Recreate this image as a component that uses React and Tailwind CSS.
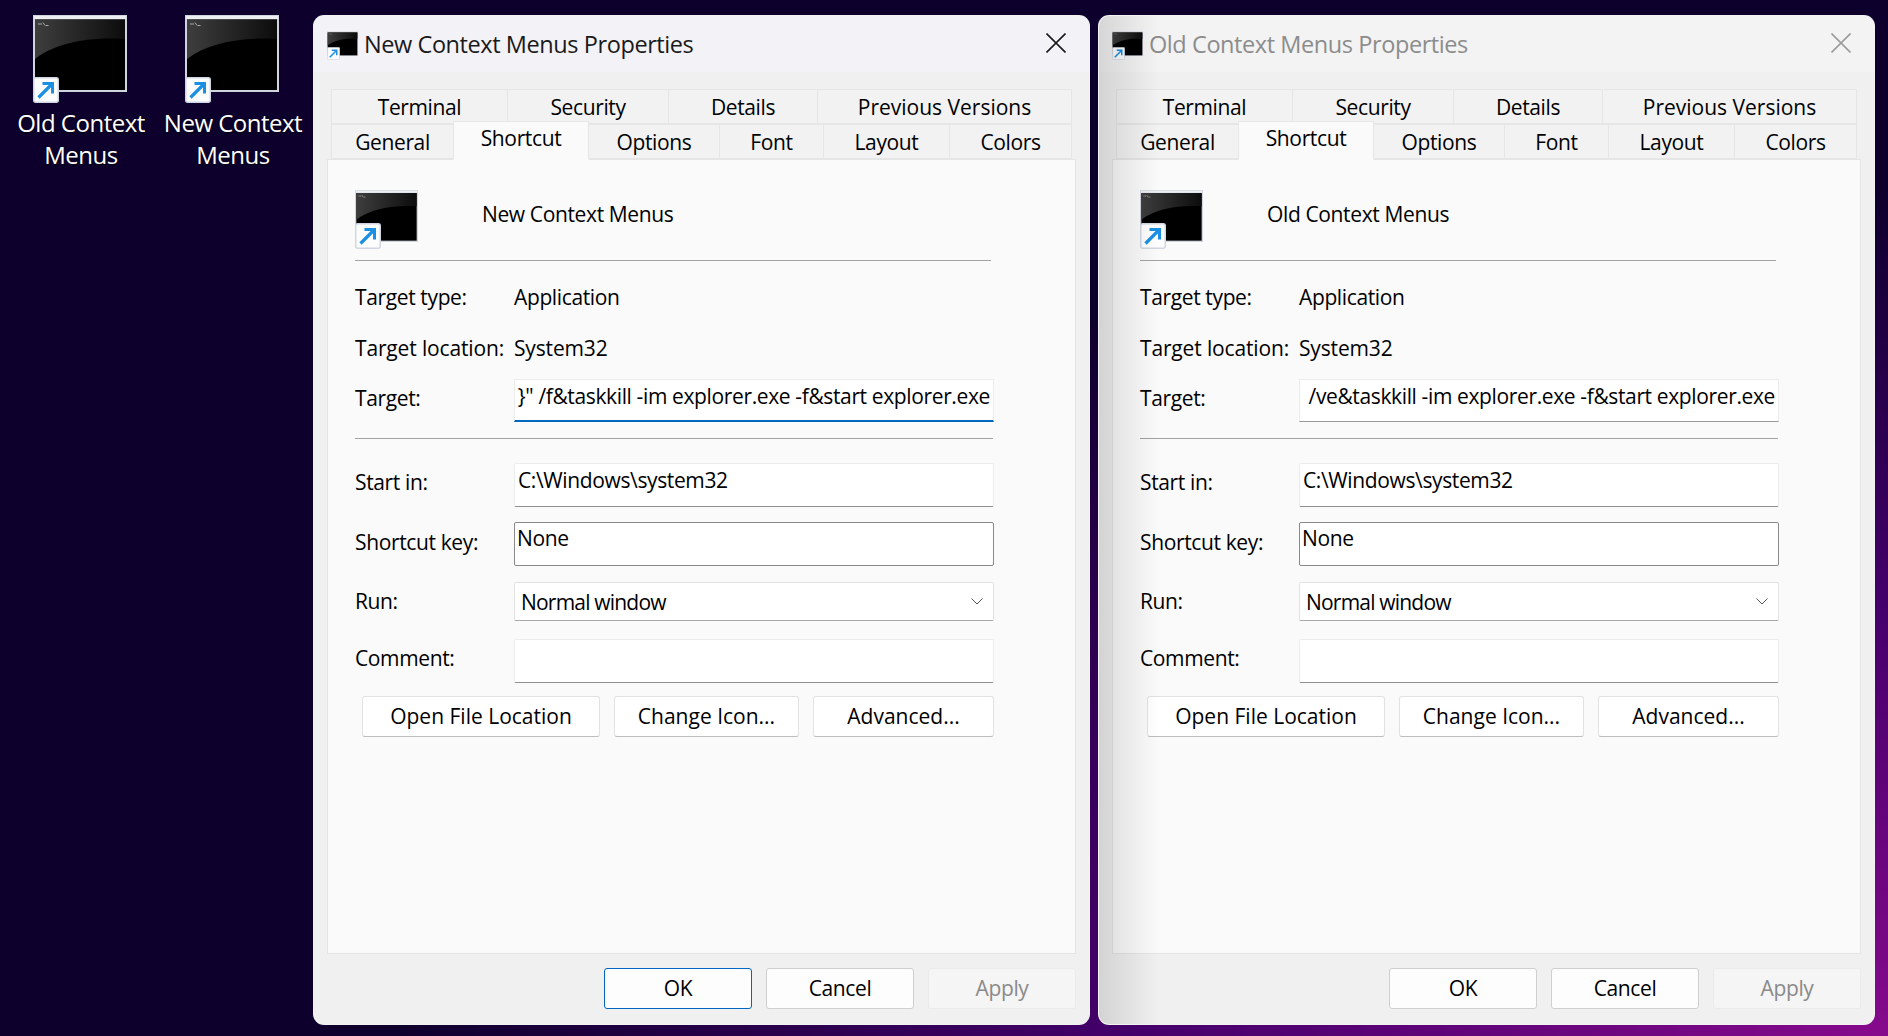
const font = "font-['Open_Sans',sans-serif]";

function ShortcutBadge({ className }) {
  return (
    <svg viewBox="0 0 26 26" className={className}>
      <rect x="0.75" y="0.75" width="24.5" height="24.5" rx="2" fill="#fdfdfe" stroke="#cfd8e2" strokeWidth="1.5" />
      <path d="M5.5 20.5 L19 7" stroke="#1a8fe3" strokeWidth="3.2" fill="none" />
      <path d="M9.5 6.5 H19.5 V16.5" stroke="#1a8fe3" strokeWidth="3" fill="none" />
    </svg>
  );
}

function ConsoleIcon({ id, frame, badge, badgeClass }) {
  return (
    <div className={`relative shrink-0 ${frame}`}>
      <svg viewBox="0 0 94 77" preserveAspectRatio="none" className="block w-full h-full">
        <defs>
          <linearGradient id={id} x1="0" x2="1" y1="0" y2="0">
            <stop offset="0" stopColor="#3e3e3e" />
            <stop offset="1" stopColor="#0c0c0c" />
          </linearGradient>
        </defs>
        <rect width="94" height="77" fill="#d0d4dc" />
        <rect x="1" y="1" width="92" height="3" fill="#eceef2" />
        <rect x="2" y="4.5" width="90" height="70.5" fill="#000" />
        <path d="M2 4.5 H92 V24 C58 22 24 27 2 44 Z" fill={`url(#${id})`} />
        <path d="M5 9 h2 M8 8 v2 M10 7.5 l2 3 M12.5 10.5 h3" stroke="#a8a8a8" strokeWidth="1" fill="none" />
      </svg>
      <ShortcutBadge className={`absolute ${badge} ${badgeClass}`} />
    </div>
  );
}

function DesktopIcon({ id, first }) {
  return (
    <div className="w-[152px] flex flex-col items-center">
      <ConsoleIcon id={id} frame="w-[94px] h-[77px] mr-[2px]" badge="w-[26px] h-[26px]" badgeClass="left-0 top-[62px]" />
      <div className="mt-[15px] text-center text-white text-[24px] leading-[32px] tracking-[-0.5px] whitespace-nowrap [text-shadow:0_1px_2px_rgba(0,0,0,0.7)]">
        <div>{first} Context</div>
        <div>Menus</div>
      </div>
    </div>
  );
}

function Tab({ w, children, className = "" }) {
  return (
    <div className={`${w} h-full flex items-center justify-center border border-[#e6e6e6] -ml-px first:ml-0 bg-[#f2f2f2] text-black`}>
      <span className={`relative top-px ${className}`}>{children}</span>
    </div>
  );
}

function Row({ label, labelH = "h-[40px]", className, children }) {
  return (
    <div className={`flex ${className}`}>
      <div className={`w-[159px] shrink-0 flex items-center ${labelH}`}>{label}</div>
      {children}
    </div>
  );
}

function Btn({ w, children }) {
  return (
    <div className={`${w} h-[41px] flex items-center justify-center rounded-[3px] bg-white border border-[#e2e2e2] border-b-[#bdbdbd] tracking-normal`}>
      {children}
    </div>
  );
}

function DialogWindow({ name, prefix, target, active }) {
  return (
    <div className="relative w-[777px] h-[1010px] shrink-0 rounded-[11px] overflow-hidden border border-white/20 bg-[#f0f0f0] flex flex-col text-[21px] tracking-[-0.37px] text-black">
      <div className={`h-[56px] shrink-0 flex items-center pl-[13px] pr-[23px] ${active ? "bg-[#f3f2f7]" : "bg-[#f3f3f3]"}`}>
        <ConsoleIcon id={`${prefix}-t`} frame="w-[31px] h-[25px] -mt-[2px]" badge="w-[13px] h-[13px]" badgeClass="left-0 top-[16px]" />
        <span className={`ml-[6px] pt-[2px] text-[23.5px] tracking-[-0.42px] ${active ? "text-[#1a1a1a]" : "text-[#8c8c8c]"}`}>
          {name} Properties
        </span>
        <svg viewBox="0 0 20 20" className="ml-auto w-[20px] h-[20px] -mt-[2px]">
          <path d="M0.5 0.5 L19.5 19.5 M19.5 0.5 L0.5 19.5" stroke={active ? "#1a1a1a" : "#9c9c9c"} strokeWidth="1.6" fill="none" />
        </svg>
      </div>

      <div className="mt-[17px] ml-[17px] flex h-[35px]">
        <Tab w="w-[177px]">Terminal</Tab>
        <Tab w="w-[162px]">Security</Tab>
        <Tab w="w-[150px]">Details</Tab>
        <Tab w="w-[255px]" className="tracking-normal">Previous Versions</Tab>
      </div>
      <div className="ml-[17px] flex h-[35px] items-end">
        <Tab w="w-[123px]">General</Tab>
        <div className="relative z-10 -ml-px -mb-px w-[136px] h-[39px] flex items-center justify-center border border-[#e6e6e6] border-b-[#fafafa] bg-[#fafafa] pb-[3px]">
          Shortcut
        </div>
        <Tab w="w-[132px]">Options</Tab>
        <Tab w="w-[105px]">Font</Tab>
        <Tab w="w-[127px]">Layout</Tab>
        <Tab w="w-[123px]">Colors</Tab>
      </div>

      <div className="mx-[13px] w-[749px] h-[795px] shrink-0 border border-[#e5e5e5] bg-[#fafafa] pl-[27px] pt-[30px]">
        <div className="flex">
          <div className="w-[127px] h-[58px] shrink-0">
            <ConsoleIcon id={`${prefix}-p`} frame="w-[63px] h-[52px]" badge="w-[26px] h-[26px]" badgeClass="left-0 top-[33px]" />
          </div>
          <div className="h-[50px] flex items-center">{name}</div>
        </div>
        <div className="mt-[12px] w-[636px] h-px bg-[#a3a3a3]" />

        <Row label="Target type:" labelH="h-[32px]" className="mt-[21px]">
          <div className="h-[32px] flex items-center">Application</div>
        </Row>
        <Row label="Target location:" labelH="h-[32px]" className="mt-[19px] tracking-[-0.15px]">
          <div className="h-[32px] flex items-center">System32</div>
        </Row>
        <Row label="Target:" className="mt-[14px]">
          <div className={`w-[480px] h-[43px] bg-white border border-[#ececec] whitespace-nowrap text-right pr-[3px] overflow-hidden pt-[1px] leading-[30px] ${active ? "border-b-2 border-b-[#0067c0]" : "border-b-[#9a9a9a]"}`}>
            {target}
          </div>
        </Row>
        <div className="mt-[16px] w-[638px] h-px bg-[#a3a3a3]" />

        <Row label="Start in:" className="mt-[24px]">
          <div className="w-[480px] h-[44px] bg-white border border-[#ececec] border-b-[#8e8e8e] rounded-[2px] pl-[3px] pt-[1px] leading-[30px]">C:\Windows\system32</div>
        </Row>
        <Row label="Shortcut key:" labelH="h-[41px]" className="mt-[15px]">
          <div className="w-[480px] h-[44px] bg-white border border-[#8a8a8a] rounded-[2px] pl-[2px] leading-[30px]">None</div>
        </Row>
        <Row label="Run:" className="mt-[16px]">
          <div className="w-[480px] h-[39px] bg-white border border-[#e2e2e2] border-b-[#a8a8a8] rounded-[2px] pl-[6px] pr-[10px] flex items-center justify-between">
            <span className="tracking-[-0.8px] relative top-px">Normal window</span>
            <svg viewBox="0 0 12 7" className="w-[12px] h-[7px]">
              <path d="M0.5 0.5 L6 6 L11.5 0.5" stroke="#555" strokeWidth="1" fill="none" />
            </svg>
          </div>
        </Row>
        <Row label="Comment:" labelH="h-[39px]" className="mt-[17px]">
          <div className="w-[480px] h-[44px] bg-white border border-[#ececec] border-b-[#8e8e8e] rounded-[2px]" />
        </Row>

        <div className="mt-[13px] ml-[7px] flex gap-[14px]">
          <Btn w="w-[238px]">Open File Location</Btn>
          <Btn w="w-[185px]">Change Icon...</Btn>
          <Btn w="w-[181px]">Advanced...</Btn>
        </div>
      </div>

      <div className="mt-[14px] pr-[13px] flex justify-end gap-[14px]">
        <div className={`w-[148px] h-[41px] flex items-center justify-center rounded-[3px] bg-[#fdfdfd] border ${active ? "border-[#0067c0]" : "border-[#cfcfcf]"}`}>OK</div>
        <div className="w-[148px] h-[41px] flex items-center justify-center rounded-[3px] bg-[#fdfdfd] border border-[#cfcfcf]">Cancel</div>
        <div className="w-[148px] h-[41px] flex items-center justify-center rounded-[3px] bg-[#f5f5f5] border border-[#ebebeb] text-[#8a8a8a]">Apply</div>
      </div>

      {!active && (
        <div className="absolute inset-y-0 left-0 w-[60px] pointer-events-none bg-gradient-to-r from-black/12 to-transparent" />
      )}
    </div>
  );
}

export default function App() {
  return (
    <div className={`w-[1888px] h-[1036px] overflow-hidden flex pt-[15px] bg-[#0d002c] bg-[radial-gradient(ellipse_1500px_850px_at_100%_100%,#860a8c_0%,#45006b_50%,#0d002c_100%)] ${font}`}>
      <div className="w-[313px] shrink-0 flex pl-[5px]">
        <DesktopIcon id="d1" first="Old" />
        <DesktopIcon id="d2" first="New" />
      </div>
      <div className="flex gap-[8px]">
        <DialogWindow
          active
          prefix="n"
          name="New Context Menus"
          target={'}" /f&taskkill -im explorer.exe -f&start explorer.exe'}
        />
        <DialogWindow
          prefix="o"
          name="Old Context Menus"
          target="/ve&taskkill -im explorer.exe -f&start explorer.exe"
        />
      </div>
    </div>
  );
}
